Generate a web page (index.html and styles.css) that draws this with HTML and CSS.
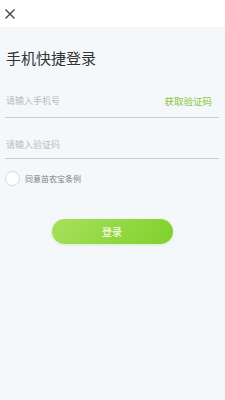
FILE: index.html
```html
<!DOCTYPE html>
<html lang="zh-CN">

<head>
    <meta charset="UTF-8">
    <meta name="viewport" content="width=device-width, initial-scale=1.0">
    <title>手机快捷登录</title>
    <link rel="stylesheet" href="styles.css">
</head>

<body>
    <div class="header">
        <svg class="close" width="12" height="12" viewBox="0 0 12 12">
            <path d="M1.5 1.5 L10.5 10.5 M10.5 1.5 L1.5 10.5" stroke="#444" stroke-width="1.4" fill="none" />
        </svg>
    </div>

    <div class="main">
        <h1 class="title">手机快捷登录</h1>

        <div class="field field-phone">
            <span class="placeholder">请输入手机号</span>
            <span class="get-code">获取验证码</span>
        </div>
        <div class="field field-code">
            <span class="placeholder">请输入验证码</span>
        </div>

        <div class="agree">
            <span class="radio"></span>
            <span>同意苗农宝条例</span>
        </div>

        <div class="btn-wrap">
            <button class="btn-login">登录</button>
        </div>
    </div>
</body>

</html>
```

FILE: styles.css
```css
html,
body {
    margin: 0;
    padding: 0;
    height: 100%;
}

body {
    font-family: "Noto Sans CJK SC", "Noto Sans", sans-serif;
    background-color: #f4f8fb;
}

.header {
    height: 27px;
    background-color: #fff;
    display: flex;
    align-items: center;
    padding-left: 4px;
}

.main {
    padding: 0 6px 0 5px;
}

.title {
    margin: 20px 0 0 1px;
    font-size: 15px;
    font-weight: normal;
    color: #333;
    line-height: 22px;
}

.field {
    display: flex;
    justify-content: space-between;
    align-items: center;
    line-height: 12px;
    border-bottom: 1px solid #c9ced3;
    font-size: 9px;
}

.field-phone {
    padding: 26px 0 10px;
}

.field-code {
    padding: 21px 0 7px;
}

.placeholder {
    color: #b9bcbf;
    padding-left: 1px;
}

.get-code {
    color: #8cc63f;
    font-size: 9.5px;
    padding-right: 7px;
}

.agree {
    display: flex;
    align-items: center;
    margin-top: 12px;
    font-size: 8px;
    color: #7d8084;
}

.radio {
    width: 13px;
    height: 13px;
    border: 1px solid #d6d9dc;
    border-radius: 50%;
    background-color: #fff;
    margin-right: 5px;
}

.btn-wrap {
    display: flex;
    justify-content: center;
    margin-top: 33px;
}

.btn-login {
    width: 121px;
    height: 25px;
    border: none;
    border-radius: 13px;
    background: linear-gradient(135deg, #a8e05e, #7fd12a);
    color: #fff;
    font-family: inherit;
    font-size: 10px;
    box-shadow: 0 1px 3px rgba(120, 200, 50, 0.25);
}
```
